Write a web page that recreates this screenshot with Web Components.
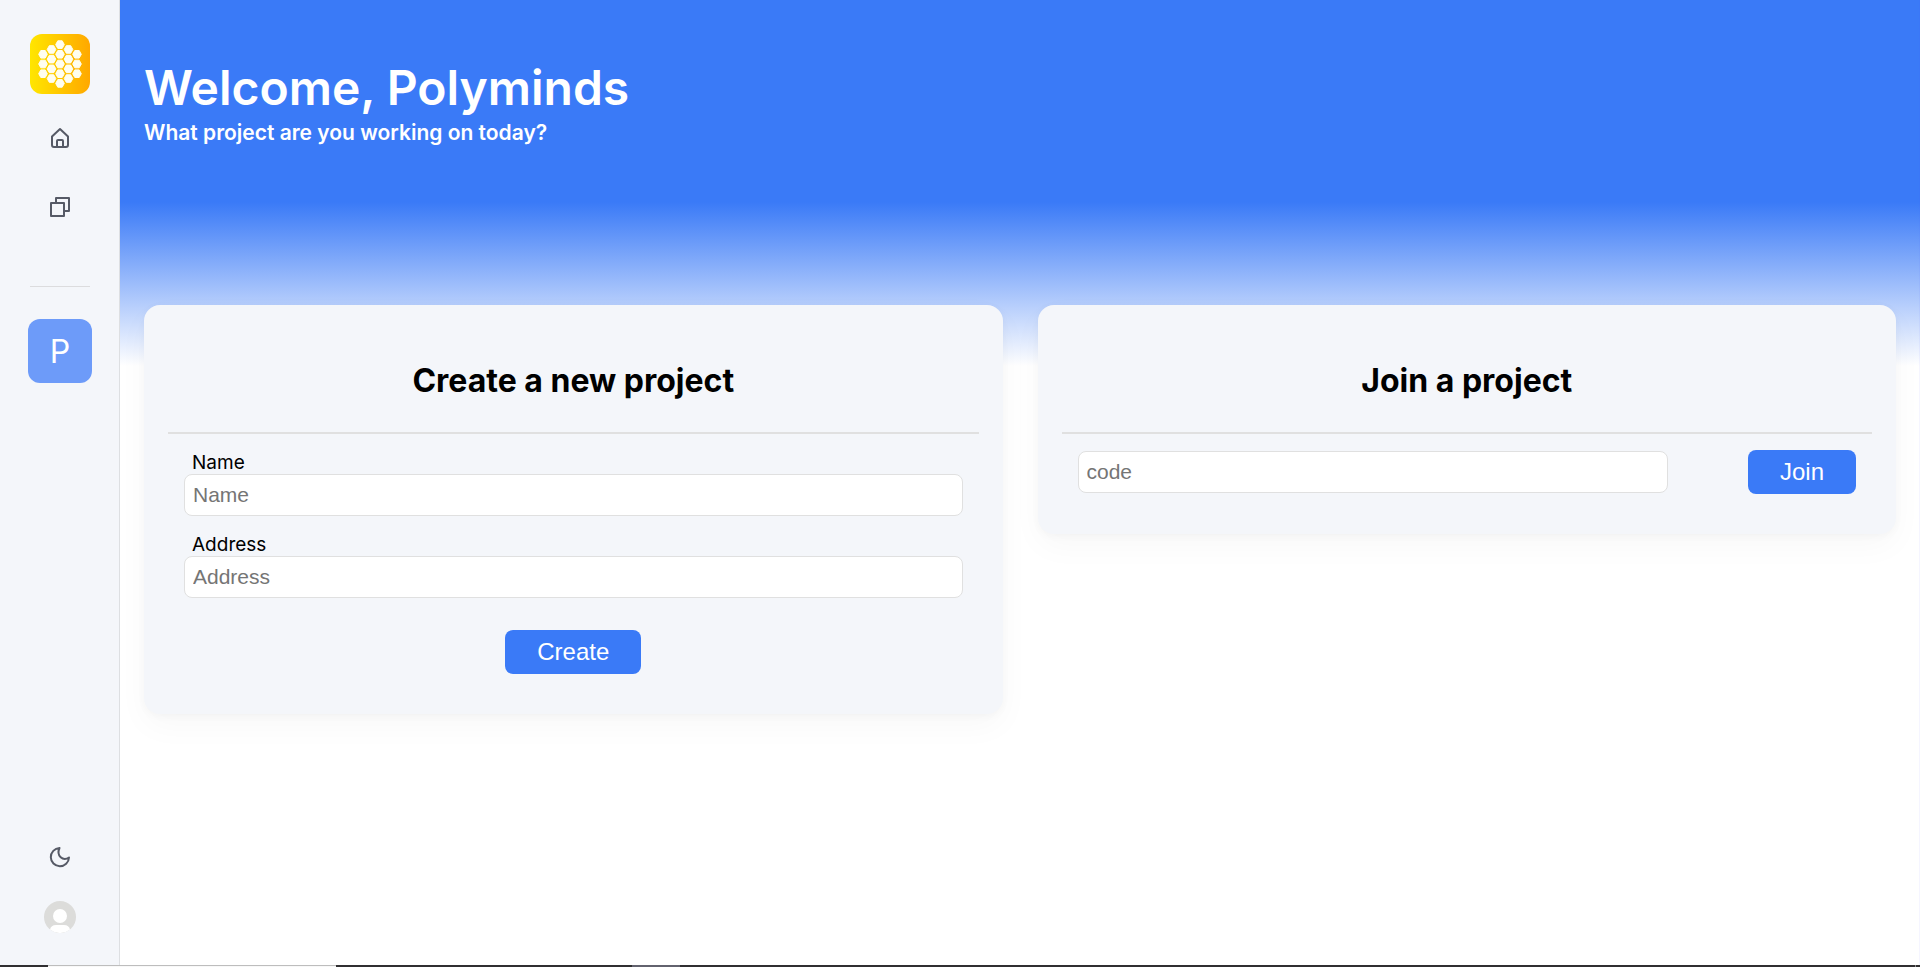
<!DOCTYPE html>
<html lang="en">
<head>
<meta charset="utf-8">
<title>Polyminds</title>
<style>
  html, body { margin: 0; height: 100%; }
  body { font-family: Inter, "Liberation Sans", sans-serif; color: #000; background: #fff; }
</style>
</head>
<body>
<app-shell>
  <side-bar slot="nav"></side-bar>
  <welcome-hero heading="Welcome, Polyminds">What project are you working on today?</welcome-hero>
  <card-row>
    <project-card heading="Create a new project"><create-form></create-form></project-card>
    <project-card heading="Join a project"><join-form></join-form></project-card>
  </card-row>
  <task-strip slot="bottom"></task-strip>
</app-shell>
<script>
const define = (name, html, setup) => customElements.define(name, class extends HTMLElement {
  constructor() {
    super();
    this.attachShadow({ mode: 'open' }).innerHTML = '<style>:host,*{box-sizing:border-box}</style>' + html;
  }
  connectedCallback() { if (setup) setup(this, this.shadowRoot); }
});

const controls = `
  input { display: block; width: 100%; padding: 8px; border: 1px solid #e0e0e0; border-radius: 8px; background: #fff;
    font: 21px/24px Arial, "Liberation Sans", sans-serif; color: #000; }
  input::placeholder { color: #757575; }
  button { padding: 8px 32px; border: 0; border-radius: 8px; background: #3a7af7; color: #fff;
    font: 24px/28px Arial, "Liberation Sans", sans-serif; cursor: pointer; }`;

define('app-shell', `
  <style>
    :host { display: grid; grid-template-columns: auto 1fr; grid-template-rows: 1fr auto; min-height: 100vh; }
    main { box-shadow: inset -1px 0 rgba(80,80,255,.06); min-width: 0; background: linear-gradient(#3a7af7 202px, #fff 366px); }
    slot[name=bottom]::slotted(*) { grid-column: 1 / -1; }
  </style>
  <slot name="nav"></slot><main><slot></slot></main><slot name="bottom"></slot>`);

define('side-bar', `
  <style>
    :host { display: flex; flex-direction: column; align-items: center; width: 120px; padding: 34px 0 32px;
      background: #f4f6fa; box-shadow: inset -1px 0 #dddfe2; }
    nav { display: flex; flex-direction: column; align-items: center; }
    a { display: block; color: #565a66; text-decoration: none; }
    svg { display: block; }
    .home { margin-top: 32px; }
    .boards { margin-top: 45px; }
    hr { width: 60px; height: 1px; margin: 67px 0 32px; border: 0; background: #dcdcde; }
    .project { width: 64px; height: 64px; border-radius: 12px; background: #6d9bf9; color: #fff;
      font-size: 32px; line-height: 66px; text-align: center; font-weight: 400; }
    .foot { display: flex; flex-direction: column; align-items: center; gap: 32px; margin-top: auto; }
    button { padding: 0; border: 0; background: none; color: #565a66; cursor: pointer; }
  </style>
  <nav aria-label="Main">
    <a href="#" aria-label="Polyminds home">
      <svg width="60" height="60" viewBox="0 0 60 60">
        <defs>
          <linearGradient id="g"><stop stop-color="#ffe600"/><stop offset="1" stop-color="#ffa800"/></linearGradient>
        </defs>
        <rect width="60" height="60" rx="12" fill="url(#g)"/>
        <g id="cells" fill="#fffef0"></g>
      </svg>
    </a>
    <a class="home" href="#" aria-label="Home">
      <svg width="24" height="24" viewBox="0 0 24 24" fill="none" stroke="currentColor" stroke-width="2" stroke-linejoin="round">
        <path d="M4 10.500 12 3l8 7.500V19a2 2 0 0 1-2 2H6a2 2 0 0 1-2-2z"/><path d="M9 21v-6a1 1 0 0 1 1-1h4a1 1 0 0 1 1 1v6"/>
      </svg>
    </a>
    <a class="boards" href="#" aria-label="Boards">
      <svg width="24" height="24" viewBox="0 0 24 24" fill="none" stroke="currentColor" stroke-width="2" stroke-linejoin="round">
        <path d="M3 8h13v13H3z"/><path d="M8 8V3h13v13h-5"/>
      </svg>
    </a>
    <hr>
    <a class="project" href="#">P</a>
  </nav>
  <div class="foot">
    <button type="button" aria-label="Dark mode">
      <svg width="24" height="24" viewBox="0 0 24 24" fill="none" stroke="currentColor" stroke-width="2" stroke-linejoin="round">
        <path d="M11.500 3A9.100 9.100 0 1 0 21 12.500C15 16.500 8 11 11.500 3z"/>
      </svg>
    </button>
    <button type="button" aria-label="Account">
      <svg width="32" height="32" viewBox="0 0 32 32">
        <circle cx="16" cy="16" r="16" fill="#dcdcda"/><circle cx="16" cy="15" r="7" fill="#fff"/>
        <path d="M6 28.500Q7 24 12 24h8q5 0 6 4.500A16 16 0 0 1 6 28.500z" fill="#fff"/>
      </svg>
    </button>
  </div>`, (el, root) => {
  const counts = [3, 4, 5, 4, 3];
  let cells = '';
  counts.forEach((n, col) => {
    for (let i = 0; i < n; i++) {
      const x = 13 + col * 8.5, y = 30 + (i - (n - 1) / 2) * 9.7;
      cells += `<path stroke="#fffef0" stroke-linejoin="round" d="M${x - 4.3} ${y}l2.100-3.800h4.400l2.100 3.800-2.100 3.800h-4.400z"/>`;
    }
  });
  root.getElementById('cells').innerHTML = cells;
});

define('welcome-hero', `
  <style>
    :host { display: block; padding: 59px 24px 0; color: #fff; }
    h1 { margin: 0; font-size: 48px; line-height: 58px; font-weight: 600; }
    p { margin: 4px 0 0; font-size: 21px; line-height: 24px; font-weight: 600; }
  </style>
  <h1></h1><p><slot></slot></p>`, (el, root) => { root.querySelector('h1').textContent = el.getAttribute('heading'); });

define('card-row', `
  <style>
    :host { display: grid; grid-template-columns: 1fr 1fr; gap: 35px; align-items: start; padding: 160px 24px 32px; }
  </style><slot></slot>`);

define('project-card', `
  <style>
    :host { display: block; padding: 56px 24px 40px; border-radius: 16px; background: #f4f6fa;
      box-shadow: 0 12px 32px rgba(0,0,0,.03), 0 2px 8px rgba(0,0,0,.03); }
    h2 { margin: 0; padding-bottom: 32px; border-bottom: 2px solid #e0e0e0; text-align: center;
      font-size: 32px; line-height: 39px; font-weight: 700; }
    div { padding: 16px 16px 0; }
  </style>
  <h2></h2><div><slot></slot></div>`, (el, root) => { root.querySelector('h2').textContent = el.getAttribute('heading'); });

define('create-form', `
  <style>
    :host { display: block; }
    ${controls}
    form { display: flex; flex-direction: column; gap: 16px; }
    label { display: block; padding: 2px 0 0 8px; font-size: 19px; line-height: 22px; font-weight: 400; }
    button { align-self: center; margin-top: 16px; }
  </style>
  <form>
    <div><label for="name">Name</label><input id="name" type="text" placeholder="Name"></div>
    <div><label for="address">Address</label><input id="address" type="text" placeholder="Address"></div>
    <button type="button">Create</button>
  </form>`);

define('join-form', `
  <style>
    :host { display: block; }
    ${controls}
    form { display: flex; align-items: center; gap: 80px; }
    input { flex: 1; min-width: 0; }
  </style>
  <form><input type="text" placeholder="code" aria-label="Project code"><button type="button">Join</button></form>`);

define('task-strip', `
  <style>
    :host { display: flex; height: 2px; background: #302f31; }
    i { width: 288px; margin-left: 48px; background: #f8f8f8; border-top: 1px solid #bdbdbd; }
    b { width: 48px; margin-left: 296px; background: #62626e; }
    u { width: 1px; margin: 0 4px 0 auto; background: #8a8a8a; }
  </style><i></i><b></b><u></u>`);
</script>
</body>
</html>
